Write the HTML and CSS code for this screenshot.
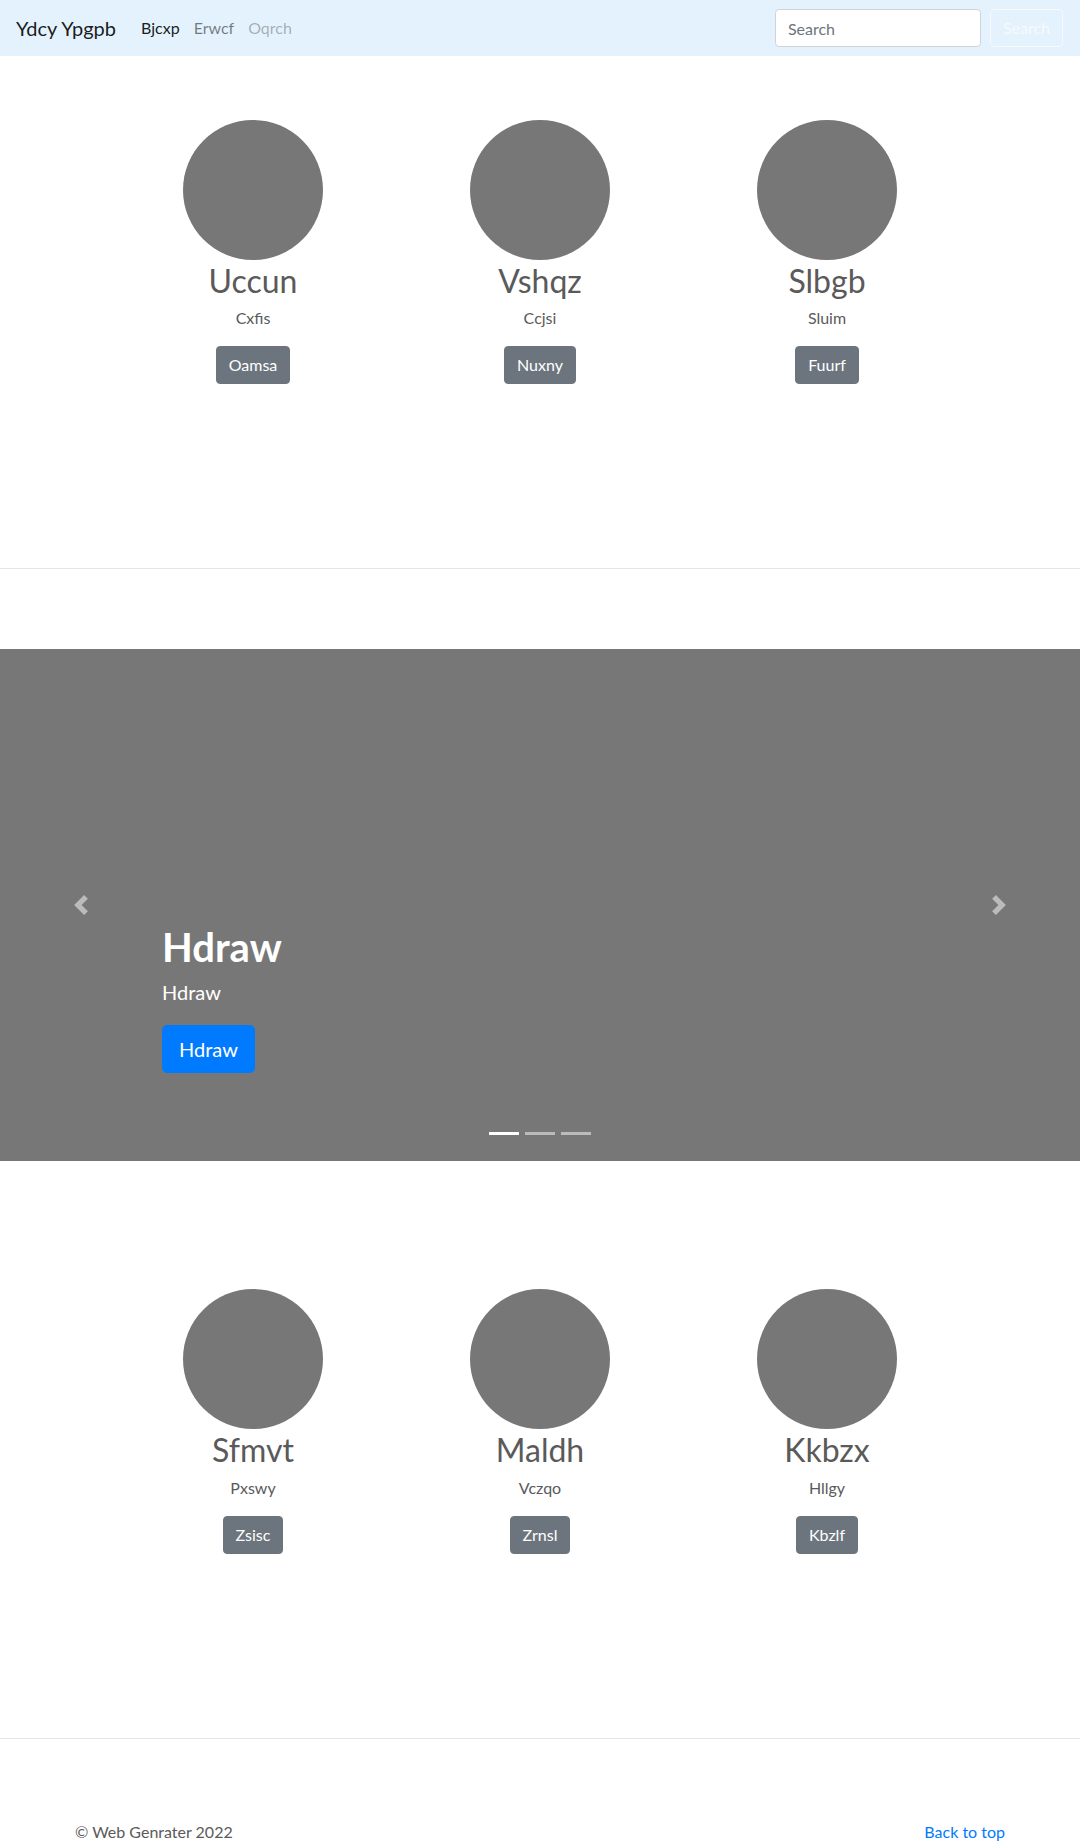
FILE: index.html
```html
<!DOCTYPE html>
<html lang="en">
<head>
<meta charset="utf-8">
<title>Ydcy Ypgpb</title>
<link rel="stylesheet" href="styles.css">
</head>
<body>
<nav class="navbar">
  <a class="brand" href="#">Ydcy Ypgpb</a>
  <ul class="nav-links">
    <li><a class="nav-link active" href="#">Bjcxp</a></li>
    <li><a class="nav-link" href="#">Erwcf</a></li>
    <li><a class="nav-link disabled" href="#">Oqrch</a></li>
  </ul>
  <form class="search-form">
    <input class="search-input" type="text" placeholder="Search">
    <button class="search-btn" type="button">Search</button>
  </form>
</nav>

<main>
  <section class="marketing first">
    <div class="feature-row">
      <div class="feature">
        <div class="circle"></div>
        <h2>Uccun</h2>
        <p>Cxfis</p>
        <a class="btn-secondary" href="#">Oamsa</a>
      </div>
      <div class="feature">
        <div class="circle"></div>
        <h2>Vshqz</h2>
        <p>Ccjsi</p>
        <a class="btn-secondary" href="#">Nuxny</a>
      </div>
      <div class="feature">
        <div class="circle"></div>
        <h2>Slbgb</h2>
        <p>Sluim</p>
        <a class="btn-secondary" href="#">Fuurf</a>
      </div>
    </div>
  </section>

  <hr class="divider">

  <div class="carousel">
    <a class="control prev" href="#">
      <svg width="20" height="20" viewBox="0 0 8 8"><path fill="#fff" d="M5.25 0l-4 4 4 4 1.5-1.5L4.25 4l2.5-2.5L5.25 0z"/></svg>
    </a>
    <div class="caption">
      <h1>Hdraw</h1>
      <p class="lead">Hdraw</p>
      <a class="btn-primary" href="#">Hdraw</a>
    </div>
    <a class="control next" href="#">
      <svg width="20" height="20" viewBox="0 0 8 8"><path fill="#fff" d="M2.75 0l-1.5 1.5L3.75 4l-2.5 2.5L2.75 8l4-4-4-4z"/></svg>
    </a>
    <ol class="indicators">
      <li class="active"></li>
      <li></li>
      <li></li>
    </ol>
  </div>

  <section class="marketing second">
    <div class="feature-row">
      <div class="feature">
        <div class="circle"></div>
        <h2>Sfmvt</h2>
        <p>Pxswy</p>
        <a class="btn-secondary" href="#">Zsisc</a>
      </div>
      <div class="feature">
        <div class="circle"></div>
        <h2>Maldh</h2>
        <p>Vczqo</p>
        <a class="btn-secondary" href="#">Zrnsl</a>
      </div>
      <div class="feature">
        <div class="circle"></div>
        <h2>Kkbzx</h2>
        <p>Hllgy</p>
        <a class="btn-secondary" href="#">Kbzlf</a>
      </div>
    </div>
  </section>

  <hr class="divider">
</main>

<footer class="footer">
  <p class="copy">&copy; Web Genrater 2022</p>
  <p class="top-link"><a href="#">Back to top</a></p>
</footer>
</body>
</html>
```

FILE: styles.css
```css
* { box-sizing: border-box; }

body {
  margin: 0;
  font-family: Lato, "Open Sans", "Liberation Sans", sans-serif;
  font-size: 16px;
  line-height: 1.5;
  color: #5a5a5a;
  background: #fff;
}

a { text-decoration: none; }

/* Navbar */
.navbar {
  height: 56px;
  background: #e3f2fd;
  display: flex;
  align-items: center;
  padding: 0 17px 0 16px;
}

.brand {
  font-size: 20px;
  line-height: 30px;
  color: rgba(0, 0, 0, 0.9);
  margin-right: 18px;
}

.nav-links {
  list-style: none;
  display: flex;
  margin: 0;
  padding: 0;
}

.nav-link {
  display: block;
  padding: 8px 7px;
  color: rgba(0, 0, 0, 0.5);
}

.nav-link.active { color: rgba(0, 0, 0, 0.9); }
.nav-link.disabled { color: rgba(0, 0, 0, 0.3); }

.search-form {
  margin-left: auto;
  display: flex;
  align-items: center;
  gap: 9px;
}

.search-input {
  width: 206px;
  height: 38px;
  padding: 6px 12px;
  font: inherit;
  font-size: 16px;
  color: #495057;
  background: #fff;
  border: 1px solid #ced4da;
  border-radius: 4px;
}

.search-input::placeholder { color: #6c757d; }

.search-btn {
  height: 38px;
  padding: 6px 12px;
  font: inherit;
  font-size: 16px;
  color: #f8f9fa;
  background: transparent;
  border: 1px solid #f8f9fa;
  border-radius: 4px;
}

/* Marketing */
.marketing.first { padding-top: 64px; }
.marketing.second { padding-top: 128px; }

.feature-row {
  display: grid;
  grid-template-columns: repeat(3, 287px);
  justify-content: center;
}

.feature {
  display: flex;
  flex-direction: column;
  align-items: center;
  text-align: center;
}

.circle {
  width: 140px;
  height: 140px;
  border-radius: 50%;
  background: #777;
}

.feature h2 {
  font-size: 32px;
  font-weight: 400;
  line-height: 1.2;
  margin: 2px 0 6px;
}

.feature p {
  margin: 0 0 16px;
}

.btn-secondary {
  display: inline-block;
  padding: 6px 12px;
  line-height: 24px;
  border: 1px solid #6c757d;
  border-radius: 4px;
  background: #6c757d;
  color: #fff;
}

.divider {
  margin: 184px 0 80px;
  border: 0;
  border-top: 1px solid rgba(0, 0, 0, 0.1);
  height: 0;
}

/* Carousel */
.carousel {
  position: relative;
  height: 512px;
  background: #777;
}

.control {
  position: absolute;
  top: 0;
  bottom: 0;
  width: 15%;
  display: flex;
  align-items: center;
  justify-content: center;
  opacity: 0.5;
}

.control svg { display: block; }
.control.prev { left: 0; }
.control.next { right: 0; }

.caption {
  position: absolute;
  left: 15%;
  right: 15%;
  bottom: 88px;
  color: #fff;
  display: flex;
  flex-direction: column;
  align-items: flex-start;
}

.caption h1 {
  font-size: 40px;
  font-weight: 700;
  line-height: 1.2;
  margin: 0 0 6px;
}

.caption .lead {
  font-size: 20px;
  line-height: 30px;
  margin: 0 0 18px;
}

.btn-primary {
  display: inline-block;
  padding: 8px 16px;
  font-size: 20px;
  line-height: 30px;
  border: 1px solid #007bff;
  border-radius: 5px;
  background: #007bff;
  color: #fff;
}

.indicators {
  position: absolute;
  left: 0;
  right: 0;
  bottom: 0;
  margin: 0 0 26px;
  padding: 0;
  list-style: none;
  display: flex;
  justify-content: center;
}

.indicators li {
  width: 30px;
  height: 3px;
  margin: 0 3px;
  background: #fff;
  opacity: 0.5;
}

.indicators li.active { opacity: 1; }

/* Footer */
.footer {
  width: 960px;
  margin: 0 auto;
  padding: 1px 15px 0;
  display: flex;
  justify-content: space-between;
}

.footer p { margin: 0 0 16px; }
.footer a { color: #007bff; }
```
